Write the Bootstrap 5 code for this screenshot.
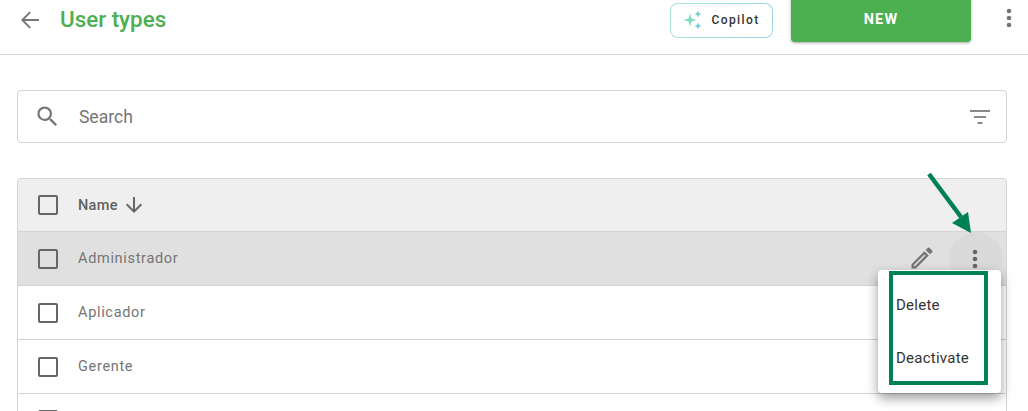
<!DOCTYPE html>
<html lang="en">
<head>
  <meta charset="UTF-8">
  <title>User types</title>
  <link rel="stylesheet" href="https://cdn.jsdelivr.net/npm/bootstrap@5.3.0/dist/css/bootstrap.min.css">
  <style>
    html, body { height: 411px; overflow: hidden; }
    body { font-family: Roboto, "Liberation Sans", sans-serif; position: relative; background: #fff; }
    .top-bar { height: 55px; border-bottom: 1px solid #d4d4d4; padding-left: 20px; padding-right: 16px; }
    .back-btn { width: 20px; height: 20px; margin-right: 20px; margin-bottom: 15px; }
    .page-title { font-size: 22.4px; font-weight: 500; color: #4caf50; margin: 0 0 15px 0; }
    .copilot-btn {
      width: 103px; height: 35px; margin-top: 2px; margin-right: 18px;
      border: 1px solid transparent; border-radius: 8px;
      background: linear-gradient(#fff, #fff) padding-box, linear-gradient(90deg, #a8e8d2, #9ad4ea) border-box;
      font-size: 12px; font-weight: 500; letter-spacing: 1.4px; color: #333;
    }
    .new-btn {
      width: 180px; height: 48px; margin-top: -6px; margin-right: 35px; padding: 4px 0 0;
      background: #4caf50; color: #fff; border: 0; border-radius: 4px;
      font-size: 14.5px; font-weight: 700; letter-spacing: 1.2px;
      box-shadow: 0 1px 3px rgba(0,0,0,.35);
    }
    .more-top { margin-bottom: 19px; }
    .content-area { padding: 35px 21px 0 17px; }
    .search-box { height: 53px; border: 1px solid #d4d4d4; border-radius: 4px; padding: 0 15px 0 15.5px; margin-bottom: 35px; }
    .search-text { font-size: 17.6px; color: #757575; margin-left: 18.400px; padding-top: 2px; }
    .table-box { border: 1px solid #d4d4d4; border-bottom: 0; border-radius: 4px 4px 0 0; }
    .grid-row { height: 54px; border-bottom: 1px solid #d4d4d4; padding-left: 20px; padding-right: 3px; font-size: 14.5px; letter-spacing: .68px; color: #757575; }
    .grid-head { height: 53px; background: #efefef; font-weight: 500; color: #616161; letter-spacing: .3px; }
    .name-label { padding-top: 2px; }
    .grid-active { background: #e0e0e0; }
    .grid-cut { height: 17px; border-bottom: 0; overflow: hidden; align-items: flex-start; padding-top: 16px; }
    .tick-box { width: 20px; height: 20px; border: 2px solid #666; border-radius: 2px; margin-right: 20px; flex: none; }
    .row-tools { margin-left: auto; }
    .dots-circle { width: 54px; height: 54px; border-radius: 50%; background: #dadada; }
    .dots-icon { margin-right: 2px; }
    .edit-icon { margin-right: 13px; margin-bottom: 2px; }
    .row-menu {
      position: absolute; left: 878px; top: 270px; width: 123px; height: 123px;
      background: #fff; border-radius: 4px;
      box-shadow: 0 5px 12px rgba(0,0,0,.4);
      padding: 9px 0 0 18px; font-size: 15px; letter-spacing: .25px; color: #333;
    }
    .row-menu div { height: 53px; line-height: 53px; }
    .mark-frame { position: absolute; left: 889px; top: 271px; width: 99px; height: 114px; border: 4px solid #008055; }
    .mark-arrow { position: absolute; left: 920px; top: 165px; }
  </style>
</head>
<body>
  <div class="top-bar d-flex align-items-center">
    <svg class="back-btn" viewBox="0 0 20 20"><path d="M19 9H4.800l6-6.200L9.500 1.500 1 10l8.500 8.500 1.300-1.300-6-6.200H19z" fill="#757575"/></svg>
    <h1 class="page-title">User types</h1>
    <button class="copilot-btn d-flex align-items-center justify-content-center gap-2 ms-auto mb-3 p-0">
      <svg width="20" height="20" viewBox="0 0 20 20">
        <path d="M7 3.500 8.500 8.500 13.500 10 8.500 11.500 7 16.500 5.500 11.500.5 10 5.500 8.500z" fill="#7fdcc0"/>
        <path d="M15 0.500 16 3 18.500 4 16 5 15 7.500 14 5 11.500 4 14 3z" fill="#72cfd0"/>
        <path d="M15 12.500 16 15 18.500 16 16 17 15 19.500 14 17 11.500 16 14 15z" fill="#6cc8dc"/>
      </svg>
      Copilot
    </button>
    <button class="new-btn mb-0 align-self-start">NEW</button>
    <svg class="more-top" width="6" height="20" viewBox="0 0 6 20"><g fill="#757575"><circle cx="3" cy="3" r="2.300"/><circle cx="3" cy="10" r="2.300"/><circle cx="3" cy="17" r="2.300"/></g></svg>
  </div>

  <div class="content-area">
    <div class="search-box d-flex align-items-center">
      <svg width="27" height="27" viewBox="0 0 24 24"><path d="M15.500 14h-.79l-.28-.27A6.470 6.470 0 0 0 16 9.500 6.500 6.500 0 1 0 9.500 16c1.610 0 3.090-.59 4.230-1.570l.27.28v.79l5 4.990L20.490 19zm-6 0C7.010 14 5 11.990 5 9.500S7.010 5 9.500 5 14 7.010 14 9.500 11.990 14 9.500 14z" fill="#757575"/></svg>
      <span class="search-text">Search</span>
      <svg class="ms-auto" width="22" height="16" viewBox="0 0 22 16"><path d="M1 1h20v2H1zM5 7h12v2H5zM8.500 13h5v2h-5z" fill="#8a8a8a"/></svg>
    </div>

    <div class="table-box">
      <div class="grid-row grid-head d-flex align-items-center">
        <span class="tick-box"></span>
        <span class="name-label">Name</span>
        <svg class="ms-1" width="24" height="24" viewBox="0 0 24 24"><path d="M20 12l-1.410-1.410L13 16.170V4h-2v12.170l-5.580-5.590L4 12l8 8z" fill="#666"/></svg>
      </div>
      <div class="grid-row grid-active d-flex align-items-center">
        <span class="tick-box"></span>
        <span>Administrador</span>
        <div class="row-tools d-flex align-items-center">
          <svg class="edit-icon" width="28" height="28" viewBox="0 0 24 24"><path d="M3 17.250V21h3.750L17.810 9.940l-3.750-3.750zM5.920 19H5v-.92l9.060-9.060.92.92zM20.710 7.040a1 1 0 0 0 0-1.410l-2.340-2.340a1 1 0 0 0-1.410 0l-1.830 1.830 3.750 3.750z" fill="#757575"/></svg>
          <div class="dots-circle d-flex align-items-center justify-content-center">
            <svg class="dots-icon" width="6" height="20" viewBox="0 0 6 20"><g fill="#666"><circle cx="3" cy="3" r="2.300"/><circle cx="3" cy="10" r="2.300"/><circle cx="3" cy="17" r="2.300"/></g></svg>
          </div>
        </div>
      </div>
      <div class="grid-row d-flex align-items-center"><span class="tick-box"></span><span>Aplicador</span></div>
      <div class="grid-row d-flex align-items-center"><span class="tick-box"></span><span>Gerente</span></div>
      <div class="grid-row grid-cut d-flex"><span class="tick-box"></span></div>
    </div>
  </div>

  <div class="row-menu">
    <div>Delete</div>
    <div>Deactivate</div>
  </div>
  <div class="mark-frame"></div>
  <svg class="mark-arrow" width="60" height="70" viewBox="0 0 60 70">
    <path d="M9 9 41 52" stroke="#008055" stroke-width="4.500" fill="none"/>
    <path d="M51 68 32 58 48 47z" fill="#008055"/>
  </svg>
</body>
</html>
